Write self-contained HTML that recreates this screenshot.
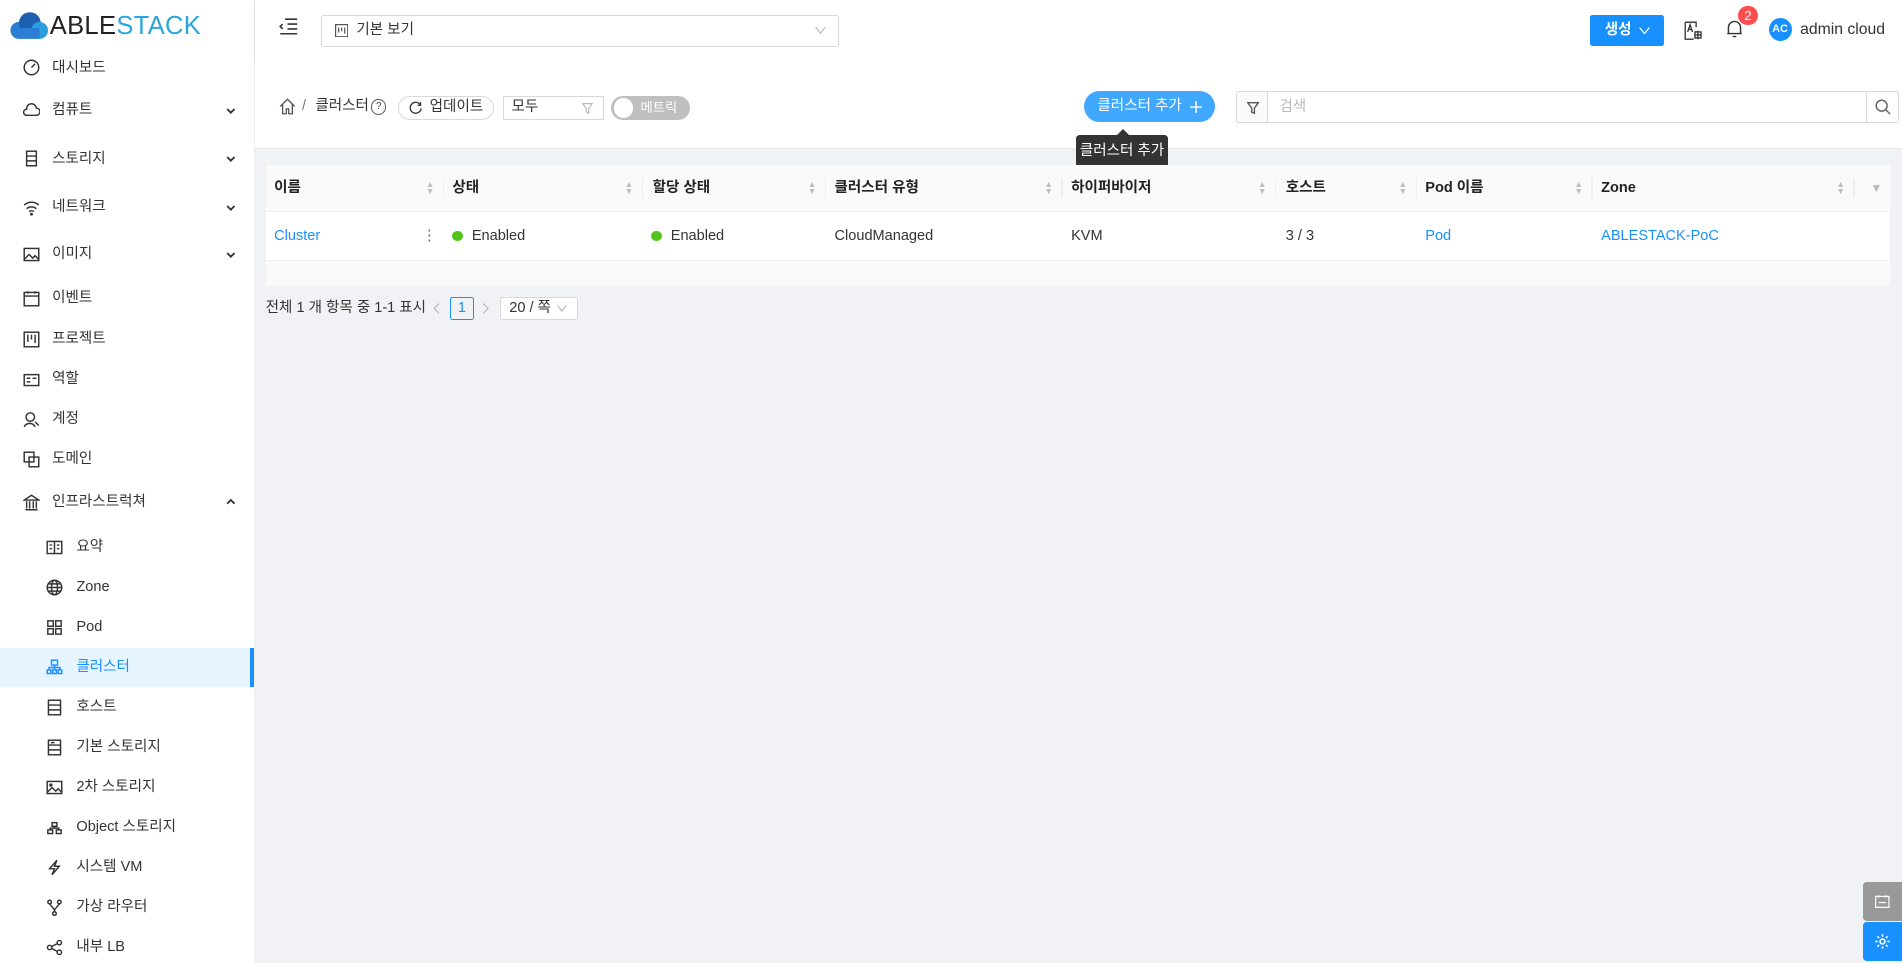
<!DOCTYPE html>
<html><head><meta charset="utf-8"><style>
html,body{margin:0;padding:0;width:1902px;height:963px;overflow:hidden;background:#f0f2f5}
#z{zoom:1.2130;width:1568px;height:794px;position:relative;font-family:"Liberation Sans","Noto Sans CJK KR",sans-serif;font-size:12px;color:#333}
.abs{position:absolute}
#side{left:0;top:0;width:209px;height:794px;background:#fff;border-right:1px solid #eee}
.mi{position:absolute;left:0;width:209px;height:32px;font-size:12px;color:#333}
.mi svg{position:absolute;top:9px;width:14px;height:14px;fill:none;stroke:#333;stroke-width:1.2}
.mi .t{position:absolute;left:43px;top:0;height:32px;display:flex;align-items:center;line-height:1}
.mi svg.ar{left:186px;top:12px;width:8px;height:8px;stroke-width:1.5}
.sub svg{left:38px}.sub .t{left:63px}
.top svg{left:19px}
.sel{background:#e6f4ff;color:#1890ff}.sel svg{stroke:#1890ff}
.sel:after{content:"";position:absolute;right:0;top:0;width:3px;height:32px;background:#1890ff}
#hdr{left:210px;top:0;width:1358px;height:52px;background:#fff;box-shadow:0 1px 4px rgba(0,21,41,.08)}
#bc{left:210px;top:52px;width:1358px;height:70px;background:#fff;border-bottom:1px solid #e8e8e8}
#card{left:219px;top:136px;width:1339px;height:99px;background:#fff}
.th{position:absolute;top:0;height:38px;line-height:38px;background:#fafafa;font-weight:bold;font-size:12px;color:#222;border-bottom:1px solid #f0f0f0}
.th .s{position:absolute;right:8px;top:0;color:#bbb;font-size:7px;line-height:6px;padding-top:13px;font-weight:normal}
.th .sep{position:absolute;right:0;top:11px;width:1px;height:16px;background:#eee}
.td{position:absolute;top:39px;height:40px;line-height:40px;font-size:12px;color:#333}
.blue{color:#1890ff}
.dot{display:inline-block;width:9px;height:9px;border-radius:50%;background:#52c41a;margin-right:7px;vertical-align:-1px}
.fc{display:flex;align-items:center;line-height:1}
</style></head><body><div id="z">
<div id="side" class="abs">
 <div class="abs" style="left:7px;top:9px;width:200px;height:24px">
  <svg width="34" height="24" viewBox="0 0 34 24" style="position:absolute;left:0;top:0"><circle cx="9" cy="16" r="7" fill="#2a7fd4"/><circle cx="18" cy="10" r="9" fill="#1f5fb0"/><circle cx="26" cy="16" r="7" fill="#2c9ee0"/><rect x="9" y="14" width="17" height="9" fill="#2a7fd4"/></svg>
  <span style="position:absolute;left:34px;top:1px;font-size:21px;letter-spacing:0.3px;line-height:24px;font-family:'Liberation Sans',sans-serif"><span style="color:#222">ABLE</span><span style="color:#2aa5de">STACK</span></span>
 </div>
 <div class="mi top" style="top:40px"><svg viewBox="0 0 14 14"><circle cx="7" cy="7" r="6"/><path d="M7 7l3-3"/></svg><span class="t">대시보드</span></div>
 <div class="mi top" style="top:75px"><svg viewBox="0 0 14 14"><path d="M3 11h8a3 3 0 0 0 0-6 4 4 0 0 0-8 1 2.5 2.5 0 0 0 0 5z"/></svg><span class="t">컴퓨트</span><svg class="ar" viewBox="0 0 8 8"><path d="M1 2.5l3 3 3-3"/></svg></div>
 <div class="mi top" style="top:115px"><svg viewBox="0 0 14 14"><rect x="3" y="1" width="8" height="12"/><path d="M3 5h8M3 9h8"/></svg><span class="t">스토리지</span><svg class="ar" viewBox="0 0 8 8"><path d="M1 2.5l3 3 3-3"/></svg></div>
 <div class="mi top" style="top:155px"><svg viewBox="0 0 14 14"><path d="M1 5a9 9 0 0 1 12 0M3 8a6 6 0 0 1 8 0M5 10.5a3 3 0 0 1 4 0"/><circle cx="7" cy="12.5" r=".6"/></svg><span class="t">네트워크</span><svg class="ar" viewBox="0 0 8 8"><path d="M1 2.5l3 3 3-3"/></svg></div>
 <div class="mi top" style="top:194px"><svg viewBox="0 0 14 14"><rect x="1" y="2" width="12" height="10"/><path d="M1 11l4-4 3 3 2-2 3 3"/></svg><span class="t">이미지</span><svg class="ar" viewBox="0 0 8 8"><path d="M1 2.5l3 3 3-3"/></svg></div>
 <div class="mi top" style="top:230px"><svg viewBox="0 0 14 14"><rect x="1" y="2" width="12" height="11"/><path d="M4 1v2M10 1v2M1 5h12"/></svg><span class="t">이벤트</span></div>
 <div class="mi top" style="top:264px"><svg viewBox="0 0 14 14"><rect x="1" y="1" width="12" height="12"/><path d="M4 3v6M7 3v4M10 3v7"/></svg><span class="t">프로젝트</span></div>
 <div class="mi top" style="top:297px"><svg viewBox="0 0 14 14"><rect x="1" y="3" width="12" height="9"/><path d="M3 6h3M3 9h3M8 6h3"/></svg><span class="t">역할</span></div>
 <div class="mi top" style="top:330px"><svg viewBox="0 0 14 14"><circle cx="6" cy="5" r="3.5"/><path d="M1 13a5 5 0 0 1 9 0M10 9l3 3"/></svg><span class="t">계정</span></div>
 <div class="mi top" style="top:363px"><svg viewBox="0 0 14 14"><rect x="1" y="1" width="8" height="8"/><rect x="5" y="5" width="8" height="8"/></svg><span class="t">도메인</span></div>
 <div class="mi top" style="top:398px"><svg viewBox="0 0 14 14"><path d="M1 5L7 1l6 4zM2 13h10M3 6v6M5.5 6v6M8.5 6v6M11 6v6"/></svg><span class="t">인프라스트럭쳐</span><svg class="ar" viewBox="0 0 8 8"><path d="M1 5.5l3-3 3 3"/></svg></div>
 <div class="mi sub" style="top:435px"><svg viewBox="0 0 14 14"><rect x="1" y="2" width="12" height="10"/><path d="M7 2v10M3 5h2M3 8h2M9 5h2M9 8h2"/></svg><span class="t">요약</span></div>
 <div class="mi sub" style="top:468px"><svg viewBox="0 0 14 14"><circle cx="7" cy="7" r="6"/><ellipse cx="7" cy="7" rx="2.5" ry="6"/><path d="M1 7h12M2 4h10M2 10h10"/></svg><span class="t">Zone</span></div>
 <div class="mi sub" style="top:501px"><svg viewBox="0 0 14 14"><rect x="1.5" y="1.5" width="4.5" height="4.5"/><rect x="8" y="1.5" width="4.5" height="4.5"/><rect x="1.5" y="8" width="4.5" height="4.5"/><rect x="8" y="8" width="4.5" height="4.5"/></svg><span class="t">Pod</span></div>
 <div class="mi sub sel" style="top:534px"><svg viewBox="0 0 14 14"><rect x="4.5" y="1" width="5" height="4"/><rect x="1" y="9" width="3" height="3"/><rect x="5.5" y="9" width="3" height="3"/><rect x="10" y="9" width="3" height="3"/><path d="M7 5v2M2.5 9V7h9v2M7 7v2"/></svg><span class="t">클러스터</span></div>
 <div class="mi sub" style="top:567px"><svg viewBox="0 0 14 14"><rect x="2" y="1" width="10" height="12"/><path d="M2 5h10M2 9h10"/></svg><span class="t">호스트</span></div>
 <div class="mi sub" style="top:600px"><svg viewBox="0 0 14 14"><rect x="2" y="1" width="10" height="12"/><path d="M2 5h10M2 9h10M4 3h3"/></svg><span class="t">기본 스토리지</span></div>
 <div class="mi sub" style="top:633px"><svg viewBox="0 0 14 14"><rect x="1" y="2" width="12" height="10"/><path d="M1 11l4-4 3 3 2-2 3 3"/><circle cx="4" cy="5" r=".8"/></svg><span class="t">2차 스토리지</span></div>
 <div class="mi sub" style="top:666px"><svg viewBox="0 0 14 14"><rect x="5" y="3" width="4" height="3"/><rect x="1.5" y="9" width="4" height="3"/><rect x="8.5" y="9" width="4" height="3"/><path d="M7 6v1.5M3.5 9V7.5h7V9"/></svg><span class="t">Object 스토리지</span></div>
 <div class="mi sub" style="top:699px"><svg viewBox="0 0 14 14"><path d="M9 1L3 8h4l-2 5 6-7H7z"/></svg><span class="t">시스템 VM</span></div>
 <div class="mi sub" style="top:732px"><svg viewBox="0 0 14 14"><circle cx="3" cy="2.5" r="1.5"/><circle cx="11" cy="2.5" r="1.5"/><circle cx="7" cy="12" r="1.5"/><path d="M3 4l4 5 4-5M7 9v1.5"/></svg><span class="t">가상 라우터</span></div>
 <div class="mi sub" style="top:765px"><svg viewBox="0 0 14 14"><circle cx="3" cy="7" r="1.8"/><circle cx="11" cy="3" r="1.8"/><circle cx="11" cy="11" r="1.8"/><path d="M4.6 6.2l4.8-2.4M4.6 7.8l4.8 2.4"/></svg><span class="t">내부 LB</span></div>
</div>

<div id="hdr" class="abs">
 <svg class="abs" style="left:20px;top:15px" width="16" height="14" viewBox="0 0 16 14" fill="none" stroke="#333" stroke-width="1.3"><path d="M5 1h10M7 5h8M7 9h8M1 13h14M3 5L1 7l2 2"/></svg>
 <div class="abs" style="left:55px;top:12px;width:425px;height:25px;border:1px solid #d9d9d9;border-radius:2px">
  <svg class="abs" style="left:10px;top:7px" width="11" height="11" viewBox="0 0 11 11" fill="none" stroke="#555"><rect x=".5" y=".5" width="10" height="10"/><path d="M3 3v4M5.5 3v3M8 3v5"/></svg>
  <span class="abs fc" style="left:28px;top:0;height:25px;font-size:12px">기본 보기</span>
  <svg class="abs" style="right:10px;top:9px" width="9" height="7" viewBox="0 0 9 7" fill="none" stroke="#bbb"><path d="M.5 1l4 5 4-5"/></svg>
 </div>
 <div class="abs fc" style="left:1101px;top:12px;width:61px;height:26px;background:#1890ff;border-radius:2px;color:#fff;font-size:12px;font-weight:bold;justify-content:center">생성<svg style="margin-left:6px" width="9" height="6" viewBox="0 0 9 6" fill="none" stroke="#fff"><path d="M.5 .5l4 5 4-5"/></svg></div>
 <svg class="abs" style="left:1178px;top:17px" width="15" height="16" viewBox="0 0 15 16" fill="none" stroke="#333" stroke-width="1.1"><path d="M1 1h9v4M1 1v14h7"/><path d="M3 9l2-6 2 6M3.8 7h2.4"/><path d="M9 9h5v5H9zM11.5 8v7M9 11.5h5"/></svg>
 <svg class="abs" style="left:1213px;top:16px" width="14" height="16" viewBox="0 0 14 16" fill="none" stroke="#333" stroke-width="1.2"><path d="M2 12V7a5 5 0 0 1 10 0v5zM1 12h12M5.5 14.5h3"/></svg>
 <div class="abs fc" style="left:1223px;top:5px;width:16px;height:16px;border-radius:50%;background:#ff4d4f;color:#fff;font-size:11px;justify-content:center">2</div>
 <div class="abs fc" style="left:1248px;top:15px;width:19px;height:19px;border-radius:50%;background:#1890ff;color:#fff;font-size:9px;justify-content:center;font-weight:bold">AC</div>
 <span class="abs fc" style="left:1274px;top:15px;height:19px;font-size:13px">admin cloud</span>
</div>

<div id="bc" class="abs">
 <svg class="abs" style="left:20px;top:29px" width="14" height="14" viewBox="0 0 14 14" fill="none" stroke="#555" stroke-width="1.1"><path d="M1 7l6-6 6 6M3 5v8h3V9h2v4h3V5"/></svg>
 <span class="abs fc" style="left:39px;top:28px;height:16px;color:#777">/</span>
 <span class="abs fc" style="left:50px;top:28px;height:16px">클러스터</span>
 <div class="abs fc" style="left:96px;top:30px;width:11px;height:11px;border:1px solid #555;border-radius:50%;font-size:8px;justify-content:center">?</div>
 <div class="abs fc" style="left:118px;top:27px;width:78px;height:18px;border:1px solid #d9d9d9;border-radius:10px;font-size:12px;justify-content:center"><svg width="11" height="11" viewBox="0 0 11 11" fill="none" stroke="#333" stroke-width="1.1" style="margin-right:6px"><path d="M9.5 3.5A4.5 4.5 0 1 0 10 6M9.5 1v2.5H7"/></svg>업데이트</div>
 <div class="abs fc" style="left:205px;top:27px;width:81px;height:18px;border:1px solid #d9d9d9"><span style="margin-left:6px">모두</span><svg class="abs" style="right:8px;top:5px" width="9" height="9" viewBox="0 0 9 9" fill="none" stroke="#bbb"><path d="M.5 .5h8L5.5 4.5v4l-2-1v-3z"/></svg></div>
 <div class="abs" style="left:294px;top:27px;width:65px;height:20px;border-radius:10px;background:#bfbfbf">
  <div class="abs" style="left:2px;top:2px;width:16px;height:16px;border-radius:50%;background:#fff"></div>
  <span class="abs fc" style="left:24px;top:0;height:20px;color:#fff;font-size:11px">메트릭</span></div>
 <div class="abs fc" style="left:684px;top:23px;width:108px;height:26px;border-radius:13px;background:#40a9ff;color:#fff;font-size:12px;justify-content:center">클러스터 추가<svg style="margin-left:7px" width="10" height="10" viewBox="0 0 10 10" stroke="#fff" stroke-width="1.2"><path d="M5 0v10M0 5h10"/></svg></div>
 <div class="abs" style="left:809px;top:23px;width:545px;height:25px;border:1px solid #d9d9d9;border-radius:2px">
  <div class="abs" style="left:0;top:0;width:25px;height:25px;background:#fafafa;border-right:1px solid #d9d9d9"><svg class="abs" style="left:8px;top:8px" width="10" height="10" viewBox="0 0 9 9" fill="none" stroke="#555"><path d="M.5 .5h8L5.5 4.5v4l-2-1v-3z"/></svg></div>
  <span class="abs fc" style="left:35px;top:0;height:25px;color:#bbb">검색</span>
  <div class="abs" style="right:0;top:0;width:26px;height:25px;border-left:1px solid #d9d9d9"><svg class="abs" style="left:7px;top:6px" width="13" height="13" viewBox="0 0 13 13" fill="none" stroke="#666" stroke-width="1.2"><circle cx="5.5" cy="5.5" r="4.5"/><path d="M9 9l3.5 3.5"/></svg></div>
 </div>
</div>
<div class="abs fc" style="left:887px;top:111px;width:76px;height:28px;background:#333;border-radius:3px;color:#fff;justify-content:center;font-size:12px">클러스터 추가</div>
<div class="abs" style="left:921px;top:106px;width:0;height:0;border:5px solid transparent;border-bottom-color:#333;border-top:0"></div>

<div id="card" class="abs">
 <div class="th" style="left:0;width:147px"><span style="margin-left:7px">이름</span><span class="s">▲<br>▼</span><span class="sep"></span></div>
 <div class="th" style="left:147px;width:164px"><span style="margin-left:7px">상태</span><span class="s">▲<br>▼</span><span class="sep"></span></div>
 <div class="th" style="left:311px;width:151px"><span style="margin-left:8px">할당 상태</span><span class="s">▲<br>▼</span><span class="sep"></span></div>
 <div class="th" style="left:462px;width:195px"><span style="margin-left:7px">클러스터 유형</span><span class="s">▲<br>▼</span><span class="sep"></span></div>
 <div class="th" style="left:657px;width:176px"><span style="margin-left:7px">하이퍼바이저</span><span class="s">▲<br>▼</span><span class="sep"></span></div>
 <div class="th" style="left:833px;width:116px"><span style="margin-left:8px">호스트</span><span class="s">▲<br>▼</span><span class="sep"></span></div>
 <div class="th" style="left:949px;width:145px"><span style="margin-left:7px">Pod 이름</span><span class="s">▲<br>▼</span><span class="sep"></span></div>
 <div class="th" style="left:1094px;width:216px"><span style="margin-left:7px">Zone</span><span class="s">▲<br>▼</span><span class="sep"></span></div>
 <div class="th" style="left:1310px;width:29px"><span style="margin-left:13px;color:#bbb;font-size:10px;font-weight:normal">▼</span></div>
 <div class="td blue" style="left:7px">Cluster</div>
 <div class="td" style="left:129px;color:#666">⋮</div>
 <div class="td" style="left:154px"><span class="dot"></span>Enabled</div>
 <div class="td" style="left:318px"><span class="dot"></span>Enabled</div>
 <div class="td" style="left:469px">CloudManaged</div>
 <div class="td" style="left:664px">KVM</div>
 <div class="td" style="left:841px">3 / 3</div>
 <div class="td blue" style="left:956px">Pod</div>
 <div class="td blue" style="left:1101px">ABLESTACK-PoC</div>
 <div class="abs" style="left:0;top:78px;width:1339px;height:21px;background:#fafafa;border-top:1px solid #f0f0f0"></div>
</div>

<span class="abs fc" style="left:219px;top:245px;height:19px;font-size:12px">전체 1 개 항목 중 1-1 표시</span>
<svg class="abs" style="left:357px;top:250px" width="6" height="9" viewBox="0 0 6 9" fill="none" stroke="#bbb"><path d="M5 .5l-4 4 4 4"/></svg>
<div class="abs fc" style="left:371px;top:245px;width:18px;height:17px;border:1px solid #1890ff;border-radius:2px;color:#1890ff;justify-content:center">1</div>
<svg class="abs" style="left:397px;top:250px" width="6" height="9" viewBox="0 0 6 9" fill="none" stroke="#bbb"><path d="M1 .5l4 4-4 4"/></svg>
<div class="abs fc" style="left:412px;top:245px;width:63px;height:17px;border:1px solid #d9d9d9;border-radius:2px;background:#fff"><span style="margin-left:7px">20 / 쪽</span><svg style="margin-left:5px" width="8" height="6" viewBox="0 0 8 6" fill="none" stroke="#bbb"><path d="M.5 .5l3.5 4.5 3.5-4.5"/></svg></div>

<div class="abs" style="left:1536px;top:727px;width:32px;height:32px;background:#999;border-radius:3px 0 0 3px"><svg class="abs" style="left:10px;top:10px" width="12" height="12" viewBox="0 0 12 12" fill="none" stroke="#fff"><rect x=".5" y="2" width="11" height="9"/><path d="M3 1v2M9 1v2M3 7h6"/></svg></div>
<div class="abs" style="left:1536px;top:760px;width:32px;height:32px;background:#1890ff;border-radius:3px 0 0 3px"><svg class="abs" style="left:9px;top:9px" width="14" height="14" viewBox="0 0 14 14" fill="none" stroke="#fff" stroke-width="1.3"><circle cx="7" cy="7" r="2"/><path d="M7 1v2M7 11v2M1 7h2M11 7h2M2.8 2.8l1.4 1.4M9.8 9.8l1.4 1.4M2.8 11.2l1.4-1.4M9.8 4.2l1.4-1.4"/></svg></div>
</div></body></html>
